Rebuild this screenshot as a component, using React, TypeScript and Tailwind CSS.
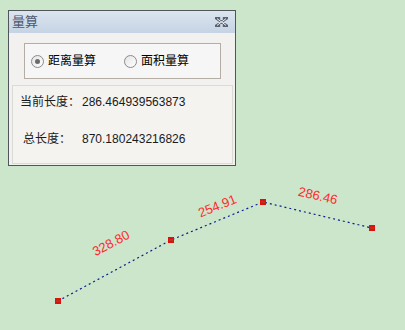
import React from 'react';

const pts: [number, number][] = [
  [58, 301],
  [171, 240],
  [263, 202],
  [372, 228],
];

const labels = [
  { text: '328.80', x: 113, y: 247, a: -28 },
  { text: '254.91', x: 219, y: 210, a: -22 },
  { text: '286.46', x: 317, y: 200, a: 13 },
];

const Radio = ({ checked, label }: { checked?: boolean; label: string }) => (
  <label className="flex items-center gap-[4px]">
    <span className="w-[13px] h-[13px] rounded-full border border-[#8a8a8a] bg-gradient-to-br from-[#e4e4e4] to-[#ffffff] flex items-center justify-center">
      {checked && <span className="w-[5px] h-[5px] rounded-full bg-[#6b6b6b]" />}
    </span>
    <span className="text-[12px] text-black leading-none">{label}</span>
  </label>
);

export default function App() {
  return (
    <div
      className="relative w-[405px] h-[330px] bg-[#cce6cc] overflow-hidden pt-[10px] pl-[8px]"
      style={{ fontFamily: '"Liberation Sans", "Noto Sans CJK SC", sans-serif' }}
    >
      {/* map drawing */}
      <svg className="absolute inset-0" width="405" height="330">
        <polyline
          points={pts.map((p) => p.join(',')).join(' ')}
          fill="none"
          stroke="#0c1e90"
          strokeWidth="1.2"
          strokeDasharray="2 3"
        />
        {pts.map(([x, y], i) => (
          <g key={i}>
            <rect x={x - 3} y={y - 3} width="6" height="6" fill="#e01010" />
            <rect x={x - 2} y={y - 0.5} width="4" height="1" fill="#8a5a10" />
          </g>
        ))}
        {labels.map((l) => (
          <text
            key={l.text}
            x={l.x}
            y={l.y}
            fill="#ff2a2a"
            fontSize="13"
            fontFamily='"Liberation Sans", sans-serif'
            textAnchor="middle"
            transform={`rotate(${l.a} ${l.x} ${l.y})`}
          >
            {l.text}
          </text>
        ))}
      </svg>

      {/* measure dialog */}
      <div className="relative w-[228px] h-[156px] border border-[#50555c] bg-[#f2f1ef] flex flex-col">
        <div className="h-[22px] bg-gradient-to-b from-[#dce5ef] to-[#c5d3e4] flex items-center justify-between px-[3px]">
          <span className="text-[13px] text-[#4c5870]">量算</span>
          <svg width="13" height="10" viewBox="0 0 13 10" className="mr-[4px]">
            <path d="M1.5 1.5 L11.5 8.5 M11.5 1.5 L1.5 8.5 M1 1 H4 M9 1 H12 M1 9 H4 M9 9 H12" stroke="#5a6470" strokeWidth="2.4" fill="none" strokeLinecap="square" />
            <path d="M2 1.6 L11 8.4 M11 1.6 L2 8.4" stroke="#ffffff" strokeWidth="0.9" fill="none" />
          </svg>
        </div>
        <div className="pt-[10px] pl-[15px]">
          <div className="w-[197px] h-[36px] border border-[#b3ada4] bg-[#f6f6f6] flex items-center pl-[6px] gap-[28px]">
            <Radio checked label="距离量算" />
            <Radio label="面积量算" />
          </div>
        </div>
        <div className="mt-[6px] mx-[3px] mr-[2px] h-[79px] border border-[#dcdad6] bg-[#f5f3f0] flex flex-col text-[12px] text-[#1a1a1a]">
          <div className="flex items-center h-[16px] mt-[8px] pl-[7px]">
            <span className="w-[62px]">当前长度：</span>
            <span>286.464939563873</span>
          </div>
          <div className="flex items-center h-[16px] mt-[21px] pl-[10px]">
            <span className="w-[59px]">总长度：</span>
            <span>870.180243216826</span>
          </div>
        </div>
      </div>
    </div>
  );
}
